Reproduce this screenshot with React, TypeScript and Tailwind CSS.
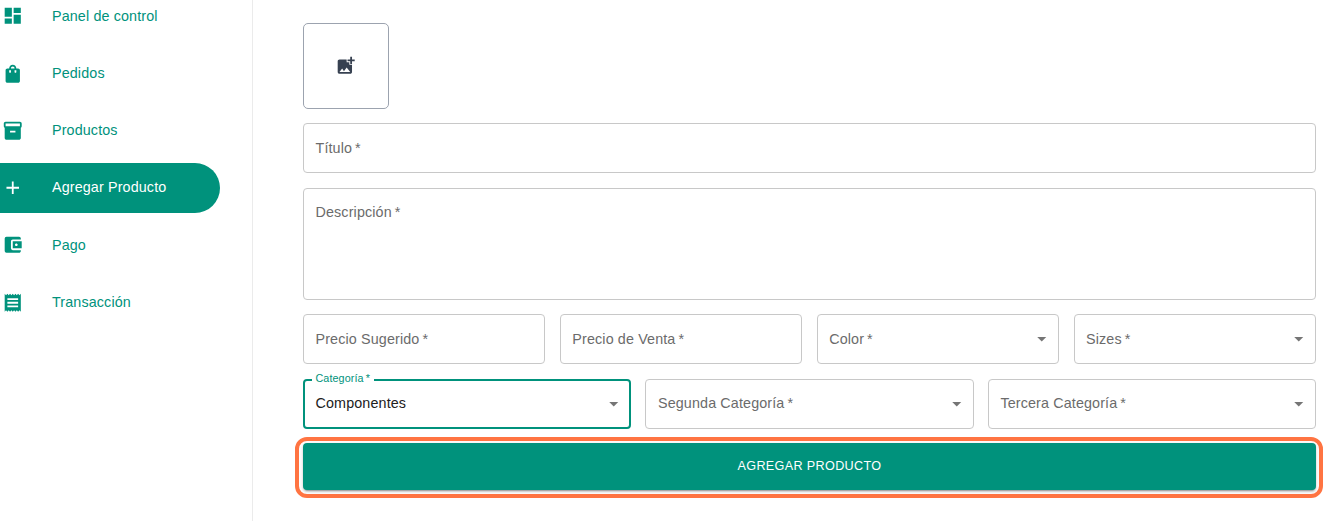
import type { ReactNode } from "react";
import type { IconType } from "react-icons";
import {
  MdAccountBalanceWallet,
  MdAdd,
  MdAddPhotoAlternate,
  MdArrowDropDown,
  MdDashboard,
  MdInventory2,
  MdReceipt,
  MdShoppingBag,
} from "react-icons/md";

const menu: { label: string; icon: IconType; active?: boolean }[] = [
  { label: "Panel de control", icon: MdDashboard },
  { label: "Pedidos", icon: MdShoppingBag },
  { label: "Productos", icon: MdInventory2 },
  { label: "Agregar Producto", icon: MdAdd, active: true },
  { label: "Pago", icon: MdAccountBalanceWallet },
  { label: "Transacción", icon: MdReceipt },
];

function Sidebar() {
  return (
    <nav className="h-[521px] w-[253px] shrink-0 overflow-hidden border-r border-[#ebebeb]">
      <ul className="-mt-[9px] flex flex-col gap-[7.3px]">
        {menu.map(({ label, icon: Icon, active }) => (
          <li
            key={label}
            className={
              active
                ? "flex h-[50px] w-[219.5px] items-center rounded-r-full bg-[#00927c] pl-[1.8px] text-white"
                : "flex h-[50px] w-[219.5px] items-center pl-[1.8px] text-[#00927c]"
            }
          >
            <Icon className="size-[21.5px] shrink-0" />
            <span className="ml-[28.7px] whitespace-nowrap">{label}</span>
          </li>
        ))}
      </ul>
    </nav>
  );
}

type FieldProps = { label: string; select?: boolean; tall?: boolean };

function Field({ label, select, tall }: FieldProps) {
  return (
    <div
      className={
        tall
          ? "flex h-28 rounded-[4px] border border-[#c8c8c8] px-[11.5px] pt-[13px] text-[#6b6b6b]"
          : "flex h-[50px] min-w-0 flex-1 items-center justify-between rounded-[4px] border border-[#c8c8c8] pr-[5.5px] pl-[11.5px] text-[#6b6b6b]"
      }
    >
      <span className="whitespace-nowrap">{label + "\u2009*"}</span>
      {select && <MdArrowDropDown className="size-[21.5px] text-[#757575]" />}
    </div>
  );
}

function FocusedSelect({ label, value }: { label: string; value: string }) {
  return (
    <div className="relative flex h-[50px] min-w-0 flex-1 items-center justify-between rounded-[4px] border-2 border-[#00927c] pr-[4.5px] pl-[10.5px] text-[#212121]">
      <span className="absolute -top-[11px] left-[6.5px] bg-white px-1 text-[10.75px] leading-4 tracking-[0.1px] whitespace-nowrap text-[#00927c]">
        {label + "\u2009*"}
      </span>
      <span>{value}</span>
      <MdArrowDropDown className="size-[21.5px] text-[#757575]" />
    </div>
  );
}

function Row({ children }: { children: ReactNode }) {
  return <div className="flex gap-[14.4px]">{children}</div>;
}

export default function App() {
  return (
    <div className="flex h-[522px] w-[1328px] overflow-hidden bg-white font-['Liberation_Sans',Arial,sans-serif] text-[14.34px] leading-[21px] tracking-[0.13px]">
      <Sidebar />
      <main className="flex min-w-0 flex-1 flex-col gap-[14.4px] pt-[23px] pr-3 pl-[50px]">
        <button className="flex size-[86px] items-center justify-center rounded-[5px] border border-[#9ca3af] text-[#374151]">
          <MdAddPhotoAlternate className="size-[21.5px]" />
        </button>
        <div className="flex">
          <Field label="Título" />
        </div>
        <Field label="Descripción" tall />
        <Row>
          <Field label="Precio Sugerido" />
          <Field label="Precio de Venta" />
          <Field label="Color" select />
          <Field label="Sizes" select />
        </Row>
        <Row>
          <FocusedSelect label="Categoría" value="Componentes" />
          <Field label="Segunda Categoría" select />
          <Field label="Tercera Categoría" select />
        </Row>
        <div className="relative">
          <button className="h-[47px] w-full rounded-[4px] bg-[#00927c] text-[12.6px] tracking-[0.35px] text-white uppercase shadow-[0_3px_1px_-2px_rgba(0,0,0,0.2),0_2px_2px_0_rgba(0,0,0,0.14),0_1px_5px_0_rgba(0,0,0,0.12)]">
            Agregar Producto
          </button>
          <span className="pointer-events-none absolute -top-[6px] -right-[7px] -bottom-[8px] -left-[8px] rounded-[12px] border-4 border-[#ff7442]" />
        </div>
      </main>
    </div>
  );
}
